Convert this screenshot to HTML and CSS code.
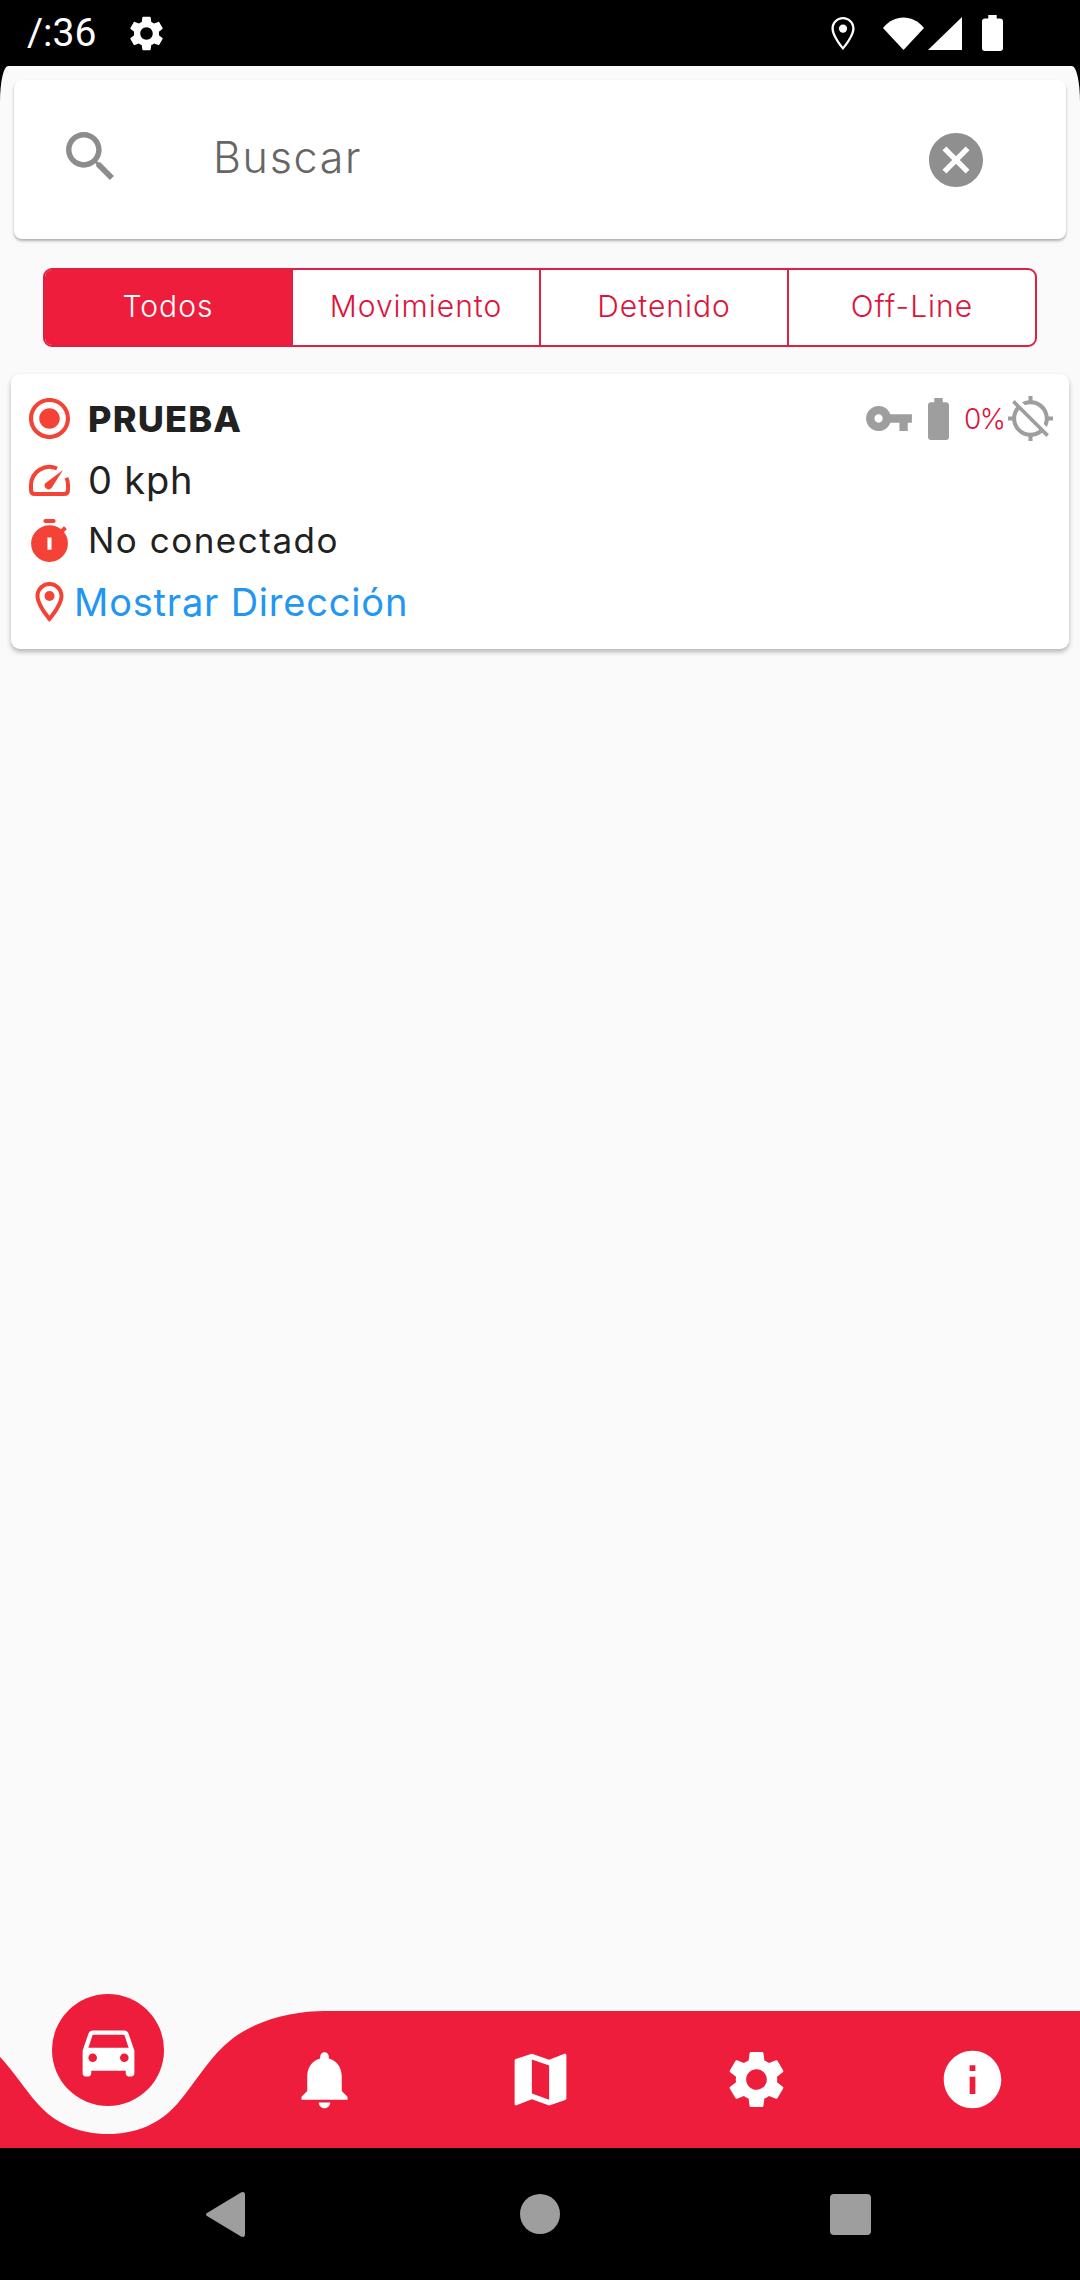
FILE: index.html
```html
<!DOCTYPE html>
<html>
<head>
    <title>Dispositivos</title>
    <link rel="stylesheet" href="styles.css">
</head>
<body>
    <div class="status-bar">
        <span class="clock">/:36</span>
        <svg class="st-gear" viewBox="2.5 2 19 20"><path d="M19.14 12.94c.04-.3.06-.61.06-.94 0-.32-.02-.64-.07-.94l2.03-1.58c.18-.14.23-.41.12-.61l-1.92-3.32c-.12-.22-.37-.29-.59-.22l-2.39.96c-.5-.38-1.03-.7-1.62-.94l-.36-2.54c-.04-.24-.24-.41-.48-.41h-3.84c-.24 0-.43.17-.47.41l-.36 2.54c-.59.24-1.13.57-1.62.94l-2.39-.96c-.22-.08-.47 0-.59.22L2.74 8.87c-.12.21-.08.47.12.61l2.03 1.58c-.05.3-.09.63-.09.94s.02.64.07.94l-2.03 1.58c-.18.14-.23.41-.12.61l1.92 3.32c.12.22.37.29.59.22l2.39-.96c.5.38 1.03.7 1.62.94l.36 2.54c.05.24.24.41.48.41h3.84c.24 0 .44-.17.47-.41l.36-2.54c.59-.24 1.13-.56 1.62-.94l2.39.96c.22.08.47 0 .59-.22l1.92-3.32c.12-.22.07-.47-.12-.61l-2.01-1.58zM12 15.6c-1.98 0-3.6-1.62-3.6-3.6s1.62-3.6 3.6-3.6 3.6 1.62 3.6 3.6-1.62 3.6-3.6 3.6z"/></svg>
        <div class="st-right">
            <svg class="st-pin" viewBox="5 2 14 20"><path d="M12 2C8.13 2 5 5.13 5 9c0 5.25 7 13 7 13s7-7.75 7-13c0-3.87-3.13-7-7-7zM6.4 9c0-3.1 2.5-5.6 5.6-5.6s5.6 2.5 5.6 5.6c0 3.2-3.2 8.1-5.6 11C9.7 17.1 6.4 12.2 6.4 9z"/><circle cx="12" cy="9" r="2.5"/></svg>
            <svg class="st-wifi" viewBox="0 0 41 33"><path d="M0 11C11-3 30-3 41 11L20.5 33z"/></svg>
            <svg class="st-signal" viewBox="0 0 34 33"><path d="M0 33L34 0v33z"/></svg>
            <svg class="st-battery" viewBox="7 2 10 20" preserveAspectRatio="none"><path d="M15.67 4H14V2h-4v2H8.33C7.6 4 7 4.6 7 5.33v15.33C7 21.4 7.6 22 8.33 22h7.33c.74 0 1.34-.6 1.34-1.33V5.33C17 4.6 16.4 4 15.67 4z"/></svg>
        </div>
    </div>

    <div class="screen">
        <div class="search-card">
            <svg class="search-icon" viewBox="3 3 17.5 17.5"><path d="M15.5 14h-.79l-.28-.27C15.41 12.59 16 11.11 16 9.5 16 5.91 13.09 3 9.5 3S3 5.91 3 9.5 5.91 16 9.5 16c1.61 0 3.09-.59 4.23-1.57l.27.28v.79l5 4.99L20.49 19l-4.99-5zm-6 0C7.01 14 5 11.99 5 9.5S7.01 5 9.5 5 14 7.01 14 9.5 11.99 14 9.5 14z"/></svg>
            <span class="search-text">Buscar</span>
            <svg class="clear-icon" viewBox="2 2 20 20"><path d="M12 2C6.47 2 2 6.47 2 12s4.47 10 10 10 10-4.47 10-10S17.53 2 12 2zm5 13.59L15.59 17 12 13.41 8.41 17 7 15.59 10.59 12 7 8.41 8.41 7 12 10.59 15.59 7 17 8.41 13.41 12 17 15.59z"/></svg>
        </div>

        <div class="tabs">
            <div class="tab active">Todos</div>
            <div class="tab">Movimiento</div>
            <div class="tab">Detenido</div>
            <div class="tab">Off-Line</div>
        </div>

        <div class="device-card">
            <div class="row">
                <svg class="row-icon target" viewBox="2 2 20 20"><path d="M12 7c-2.76 0-5 2.24-5 5s2.24 5 5 5 5-2.24 5-5-2.24-5-5-5zm0-5C6.48 2 2 6.48 2 12s4.48 10 10 10 10-4.48 10-10S17.52 2 12 2zm0 18c-4.42 0-8-3.58-8-8s3.58-8 8-8 8 3.58 8 8-3.58 8-8 8z"/></svg>
                <span class="device-name">PRUEBA</span>
                <div class="device-status">
                    <svg class="key-icon" viewBox="1 6 22 12"><path d="M12.65 10C11.83 7.67 9.61 6 7 6c-3.31 0-6 2.69-6 6s2.69 6 6 6c2.61 0 4.83-1.67 5.65-4H17v4h4v-4h2v-4H12.65zM7 14c-1.1 0-2-.9-2-2s.9-2 2-2 2 .9 2 2-.9 2-2 2z"/></svg>
                    <svg class="battery-icon" viewBox="7 2 10 20"><path d="M15.67 4H14V2h-4v2H8.33C7.6 4 7 4.6 7 5.33v15.33C7 21.4 7.6 22 8.33 22h7.33c.74 0 1.34-.6 1.34-1.33V5.33C17 4.6 16.4 4 15.67 4z"/></svg>
                    <span class="percent">0%</span>
                    <svg class="gps-icon" viewBox="1 1 22 22"><path d="M20.94 11c-.46-4.17-3.77-7.48-7.94-7.94V1h-2v2.06c-1.13.12-2.19.46-3.16.97l1.5 1.5C10.16 5.19 11.06 5 12 5c3.87 0 7 3.13 7 7 0 .94-.19 1.84-.52 2.65l1.5 1.5c.5-.96.84-2.02.97-3.15H23v-2h-2.06zM3 4.27l2.04 2.04C3.97 7.62 3.25 9.23 3.06 11H1v2h2.06c.46 4.17 3.77 7.48 7.94 7.94V23h2v-2.06c1.77-.2 3.38-.91 4.69-1.98L19.73 21 21 19.73 4.27 3 3 4.27zm13.27 13.27C15.09 18.45 13.61 19 12 19c-3.87 0-7-3.13-7-7 0-1.61.55-3.09 1.46-4.27l9.81 9.81z"/></svg>
                </div>
            </div>
            <div class="row">
                <svg class="row-icon speed" viewBox="0 0 41 32"><path class="speed-line" d="M28 4.5A18.5 18.5 0 0 0 2 21v5q0 4 4 4h29q4 0 4-4v-5a18.5 18.5 0 0 0-1.5-7.3"/><path d="M34 6L22.5 24a4 4 0 0 1-6.5-4.5z"/></svg>
                <span class="row-text big">0 kph</span>
            </div>
            <div class="row">
                <svg class="row-icon timer" viewBox="3 1 18 21"><path fill-rule="evenodd" d="M10 1h4a1 1 0 0 1 0 2h-4a1 1 0 0 1 0-2zM11 10h2v6h-2zM19.03 7.39l1.42-1.42c-.43-.51-.9-.99-1.41-1.41l-1.42 1.42C16.07 4.74 14.12 4 12 4c-4.97 0-9 4.03-9 9s4.02 9 9 9 9-4.03 9-9c0-2.12-.74-4.07-1.97-5.61z"/></svg>
                <span class="row-text">No conectado</span>
            </div>
            <div class="row">
                <svg class="row-icon pin" viewBox="5 2 14 20"><path d="M12 2C8.13 2 5 5.13 5 9c0 5.25 7 13 7 13s7-7.75 7-13c0-3.87-3.13-7-7-7zM7 9c0-2.76 2.24-5 5-5s5 2.24 5 5c0 2.88-2.88 7.19-5 9.88C9.92 16.21 7 11.85 7 9z"/><circle cx="12" cy="9" r="2.5"/></svg>
                <span class="address">Mostrar Dirección</span>
            </div>
        </div>

        <div class="spacer"></div>

        <div class="bottom-nav">
            <svg class="nav-bg" viewBox="0 0 1080 137"><path d="M0 137V46C10 56 25 78 37 92 55 113 80 123 108 123s52-10 70-31C195 72 210 45 232 28 258 8 295 0 325 0H1080V137z"/></svg>
            <div class="nav-bubble">
                <svg class="nav-icon" viewBox="0 0 24 24"><path d="M18.92 6.01C18.72 5.42 18.16 5 17.5 5h-11c-.66 0-1.21.42-1.42 1.01L3 12v8c0 .55.45 1 1 1h1c.55 0 1-.45 1-1v-1h12v1c0 .55.45 1 1 1h1c.55 0 1-.45 1-1v-8l-2.08-5.99zM6.5 16c-.83 0-1.5-.67-1.5-1.5S5.67 13 6.5 13s1.5.67 1.5 1.5S7.33 16 6.5 16zm11 0c-.83 0-1.5-.67-1.5-1.5s.67-1.5 1.5-1.5 1.5.67 1.5 1.5-.67 1.5-1.5 1.5zM5 11l1.5-4.5h11L19 11H5z"/></svg>
            </div>
            <div class="nav-item"></div>
            <div class="nav-item">
                <svg class="nav-icon" viewBox="0 0 24 24"><path d="M12 22c1.1 0 2-.9 2-2h-4c0 1.1.89 2 2 2zm6-6v-5c0-3.07-1.64-5.64-4.5-6.32V4c0-.83-.67-1.5-1.5-1.5s-1.5.67-1.5 1.5v.68C7.63 5.36 6 7.92 6 11v5l-2 2v1h16v-1l-2-2z"/></svg>
            </div>
            <div class="nav-item">
                <svg class="nav-icon" viewBox="0 0 24 24"><path d="M20.5 3l-.16.03L15 5.1 9 3 3.36 4.9c-.21.07-.36.25-.36.48V20.5c0 .28.22.5.5.5l.16-.03L9 18.9l6 2.1 5.64-1.9c.21-.07.36-.25.36-.48V3.5c0-.28-.22-.5-.5-.5zM15 19l-6-2.11V5l6 2.11V19z"/></svg>
            </div>
            <div class="nav-item">
                <svg class="nav-icon" viewBox="0 0 24 24"><path d="M19.14 12.94c.04-.3.06-.61.06-.94 0-.32-.02-.64-.07-.94l2.03-1.58c.18-.14.23-.41.12-.61l-1.92-3.32c-.12-.22-.37-.29-.59-.22l-2.39.96c-.5-.38-1.03-.7-1.62-.94l-.36-2.54c-.04-.24-.24-.41-.48-.41h-3.84c-.24 0-.43.17-.47.41l-.36 2.54c-.59.24-1.13.57-1.62.94l-2.39-.96c-.22-.08-.47 0-.59.22L2.74 8.87c-.12.21-.08.47.12.61l2.03 1.58c-.05.3-.09.63-.09.94s.02.64.07.94l-2.03 1.58c-.18.14-.23.41-.12.61l1.92 3.32c.12.22.37.29.59.22l2.39-.96c.5.38 1.03.7 1.62.94l.36 2.54c.05.24.24.41.48.41h3.84c.24 0 .44-.17.47-.41l.36-2.54c.59-.24 1.13-.56 1.62-.94l2.39.96c.22.08.47 0 .59-.22l1.92-3.32c.12-.22.07-.47-.12-.61l-2.01-1.58zM12 15.6c-1.98 0-3.6-1.62-3.6-3.6s1.62-3.6 3.6-3.6 3.6 1.62 3.6 3.6-1.62 3.6-3.6 3.6z"/></svg>
            </div>
            <div class="nav-item">
                <svg class="nav-icon" viewBox="0 0 24 24"><path d="M12 2C6.48 2 2 6.48 2 12s4.48 10 10 10 10-4.48 10-10S17.52 2 12 2zm1 15h-2v-6h2v6zm0-8h-2V7h2v2z"/></svg>
            </div>
        </div>
    </div>

    <div class="android-nav">
        <svg class="back-btn" viewBox="0 0 39 45"><path d="M1 21L35 .5Q39-1 39 3v39q0 4-4 2.500L1 24q-2-1.500 0-3z"/></svg>
        <div class="home-btn"></div>
        <div class="recent-btn"></div>
    </div>
</body>
</html>
```

FILE: styles.css
```css
* { box-sizing: border-box; }
body { margin: 0; width: 1080px; height: 2280px; display: flex; flex-direction: column; background: #000; font-family: Inter, "Noto Sans", sans-serif; overflow: hidden; }
svg { display: block; flex: none; }

/* status bar */
.status-bar { height: 66px; display: flex; align-items: center; padding-left: 27px; color: #fff; fill: #fff; }
.clock { width: 103px; font-family: Roboto, sans-serif; font-size: 39px; }
.st-gear { width: 33px; height: 35px; }
.st-right { margin-left: auto; display: flex; align-items: center; padding-right: 77px; }
.st-pin { width: 24px; height: 33px; margin-right: 28px; }
.st-wifi { width: 41px; height: 33px; margin-right: 4px; }
.st-signal { width: 34px; height: 33px; margin-right: 20px; }
.st-battery { width: 21px; height: 36px; }

/* main screen */
.screen { flex: 1; display: flex; flex-direction: column; background: #fafafa; border-radius: 8px 8px 0 0 / 36px 36px 0 0; }
.spacer { flex: 1; }

.search-card { height: 159px; margin: 14px 14px 0; padding: 0 83px 0 52px; display: flex; align-items: center; background: #fff; border-radius: 8px; box-shadow: 0 2px 3px rgba(0,0,0,.3); }
.search-icon { width: 48px; height: 48px; margin-bottom: 8px; fill: #8c8c8c; }
.search-text { margin: 0 0 5px 99px; font-size: 43px; font-weight: 300; letter-spacing: 1.7px; color: #666; }
.clear-icon { width: 54px; height: 54px; margin-left: auto; fill: #8f8f8f; }

.tabs { height: 79px; margin: 29px 43px 0; display: flex; background: #fff; border: 2px solid #dc2144; border-radius: 9px; overflow: hidden; }
.tab { flex: 1; display: flex; align-items: center; justify-content: center; padding-bottom: 3px; font-size: 30px; font-weight: 300; letter-spacing: 1px; color: #dc143c; border-left: 2px solid #dc2144; }
.tab.active { flex: none; width: 246px; background: #ee1d3b; color: #fff; border-left: none; }

.device-card { height: 275px; margin: 27px 11px 0; padding: 14px 16px 0 18px; background: #fff; border-radius: 9px; box-shadow: 0 3px 5px rgba(0,0,0,.28); }
.row { height: 61px; display: flex; align-items: center; }
.row-icon { fill: #f44336; margin-right: 18px; }
.target { width: 41px; height: 41px; }
.speed { width: 41px; height: 32px; }
.speed-line { fill: none; stroke: #f44336; stroke-width: 4; }
.timer { width: 37px; height: 43px; margin-left: 2px; margin-right: 20px; }
.pin { width: 29px; height: 40px; margin-left: 6px; margin-right: 10px; }
.device-name { font-size: 36px; font-weight: 800; letter-spacing: 1.2px; color: #212121; }
.row-text { padding-bottom: 2px; font-size: 35px; font-weight: 400; letter-spacing: 1.5px; color: #212121; }
.row-text.big { padding-bottom: 0; font-size: 38px; letter-spacing: .8px; }
.address { font-size: 38px; letter-spacing: .8px; color: #2196f3; }

.device-status { margin-left: auto; display: flex; align-items: center; fill: #9e9e9e; }
.key-icon { width: 46px; height: 25px; }
.battery-icon { width: 21px; height: 42px; margin-left: 16px; }
.percent { width: 44px; margin-left: 15px; font-size: 28px; font-weight: 300; letter-spacing: -1.5px; color: #dc143c; white-space: nowrap; }
.gps-icon { width: 45px; height: 45px; }

/* bottom navigation */
.bottom-nav { position: relative; height: 137px; display: flex; }
.nav-bg { position: absolute; left: 0; top: 0; width: 1080px; height: 137px; fill: #ee1d3b; }
.nav-bubble { position: absolute; left: 52px; top: -17px; width: 112px; height: 112px; border-radius: 50%; background: #ee1d3b; display: flex; align-items: center; justify-content: center; }
.nav-item { position: relative; flex: 1; display: flex; align-items: center; justify-content: center; }
.nav-icon { width: 69px; height: 69px; fill: #fff; }

/* android buttons */
.android-nav { height: 132px; display: flex; align-items: center; background: #000; padding-left: 206px; }
.back-btn { width: 39px; height: 45px; fill: #9e9e9e; }
.home-btn { width: 40px; height: 40px; margin-left: 275px; border-radius: 50%; background: #9e9e9e; }
.recent-btn { width: 41px; height: 41px; margin-left: 270px; border-radius: 4px; background: #9e9e9e; }
```
